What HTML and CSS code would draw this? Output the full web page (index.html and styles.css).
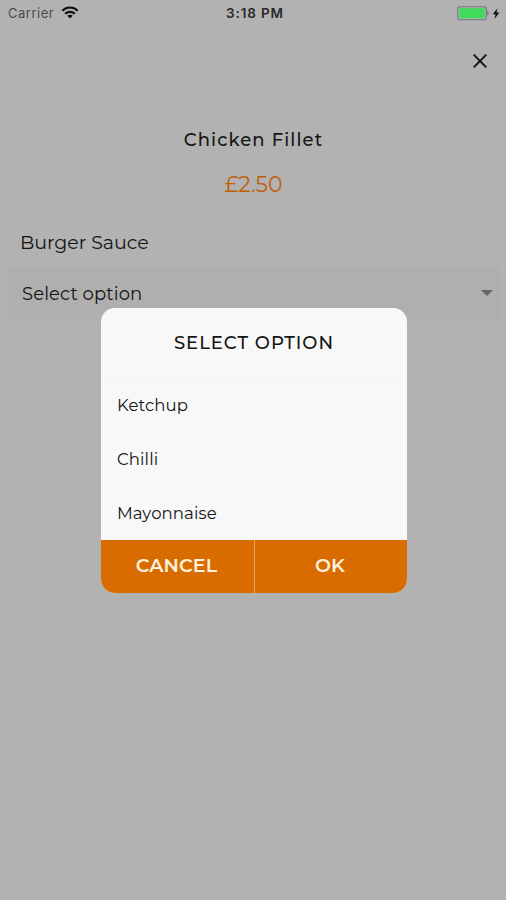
FILE: index.html
```html
<!DOCTYPE html>
<html lang="en">
<head>
<meta charset="utf-8">
<title>Chicken Fillet</title>
<link rel="stylesheet" href="styles.css">
</head>
<body>
<main class="screen">
  <header class="status">
    <div class="carrier"><span>Carrier</span>
      <svg class="wifi" width="18" height="13" viewBox="0 0 18 13" fill="none" stroke="#111" stroke-width="2.1"><path d="M1.3 4.7C5.7.5 12.3.5 16.7 4.7M4.1 7.7c2.8-2.5 7-2.5 9.8 0"/><path d="M6.3 9.7c1.6-1.4 3.8-1.4 5.4 0L9 12.6z" fill="#111" stroke="none"/></svg>
    </div>
    <time class="time">3:18 PM</time>
    <div class="power">
      <svg width="45" height="16" viewBox="0 0 45 16"><rect x="1.7" y=".8" width="28.6" height="12.9" rx="2.5" fill="none" stroke="#777" stroke-width="1.1"/><rect x="3.2" y="2.3" width="25.6" height="9.9" rx="1" fill="#3fdc5b"/><path d="M31.2 5c2 .7 2 4 0 4.700z" fill="#777"/><path d="M41.400 2.200 36.700 8.300h2.800l-1 4.600 4.900-6.300h-2.900z" fill="#111"/></svg>
    </div>
  </header>
  <button class="close" aria-label="Close"><svg width="14" height="14" viewBox="0 0 14 14" stroke="#111" stroke-width="1.9"><path d="M.7.7l12.600 12.600M13.300.7L.7 13.300"/></svg></button>
  <h1 class="name">Chicken Fillet</h1>
  <p class="price">£2.50</p>
  <h2 class="group">Burger Sauce</h2>
  <div class="select"><span>Select option</span><svg width="12" height="6" viewBox="0 0 12 6"><path d="M0 0h12L6 6z" fill="#666"/></svg></div>
  <section class="dialog" role="dialog">
    <h2 class="title">SELECT OPTION</h2>
    <ul class="options">
      <li>Ketchup</li>
      <li>Chilli</li>
      <li>Mayonnaise</li>
    </ul>
    <div class="actions"><button class="cancel">CANCEL</button><button class="ok">OK</button></div>
  </section>
</main>
</body>
</html>
```
FILE: styles.css
```css
* { box-sizing: border-box; margin: 0; padding: 0; }
body { background: #b2b2b2; color: #141414; font-family: Montserrat, Inter, sans-serif; }
button { border: 0; background: none; font: inherit; color: inherit; }
h1, h2 { font-weight: 500; }
.screen { position: relative; width: 506px; height: 900px; overflow: hidden; }
.status { display: grid; grid-template-columns: 1fr auto 1fr; height: 27px; align-items: center; padding: 0 5px 0 8px; font-family: Inter, sans-serif; font-size: 13px; }
.carrier { display: flex; align-items: center; gap: 7px; color: #4c4c4c; letter-spacing: .5px; }
.carrier span, .time { padding-bottom: 1px; }
.carrier svg { margin-top: -2px; }
.time { font-size: 13.5px; font-weight: 600; letter-spacing: .85px; color: #292929; padding-left: 1px; }
.power { display: flex; justify-content: flex-end; }
.power svg { margin-top: 1px; }
.close { display: block; width: 14px; height: 14px; margin: 27px 19px 0 auto; }
.close svg { display: block; }
.name { margin-top: 60px; height: 24px; line-height: 24px; font-size: 18px; letter-spacing: 1.1px; text-align: center; padding-left: 1px; }
.price { margin-top: 18px; height: 30px; line-height: 30px; font-size: 22px; letter-spacing: 0; text-align: center; color: #bd6107; padding-left: 1px; }
.group { margin-top: 31px; height: 24px; line-height: 24px; padding-left: 20px; font-size: 19px; font-weight: 400; letter-spacing: -.05px; }
.select { display: flex; justify-content: space-between; align-items: center; margin: 11px 6px 0 8px; height: 54px; padding: 0 7px 0 14px; background: #afafaf; font-size: 18px; font-weight: 400; letter-spacing: .1px; }
.select span { padding-top: 1px; }
.dialog { position: absolute; left: 101px; top: 308px; width: 306px; height: 285px; border-radius: 14px; overflow: hidden; background: #f8f8f8; }
.title { height: 70px; line-height: 70px; border-bottom: 1px solid #f3f3f3; text-align: center; font-size: 18px; letter-spacing: 1px; }
.options { height: 162px; list-style: none; font-size: 16.500px; }
.options li { height: 54px; line-height: 54px; padding-left: 16px; letter-spacing: .1px; }
.actions { display: grid; grid-template-columns: 154px 152px; height: 53px; background: #d96c00; color: #fff1dc; font-size: 19px; font-weight: 600; }
.cancel { border-right: 1px solid #eaa35b; letter-spacing: .1px; padding: 0 2px 2px 0; }
.ok { letter-spacing: .1px; padding: 0 2px 2px 0; }
```
